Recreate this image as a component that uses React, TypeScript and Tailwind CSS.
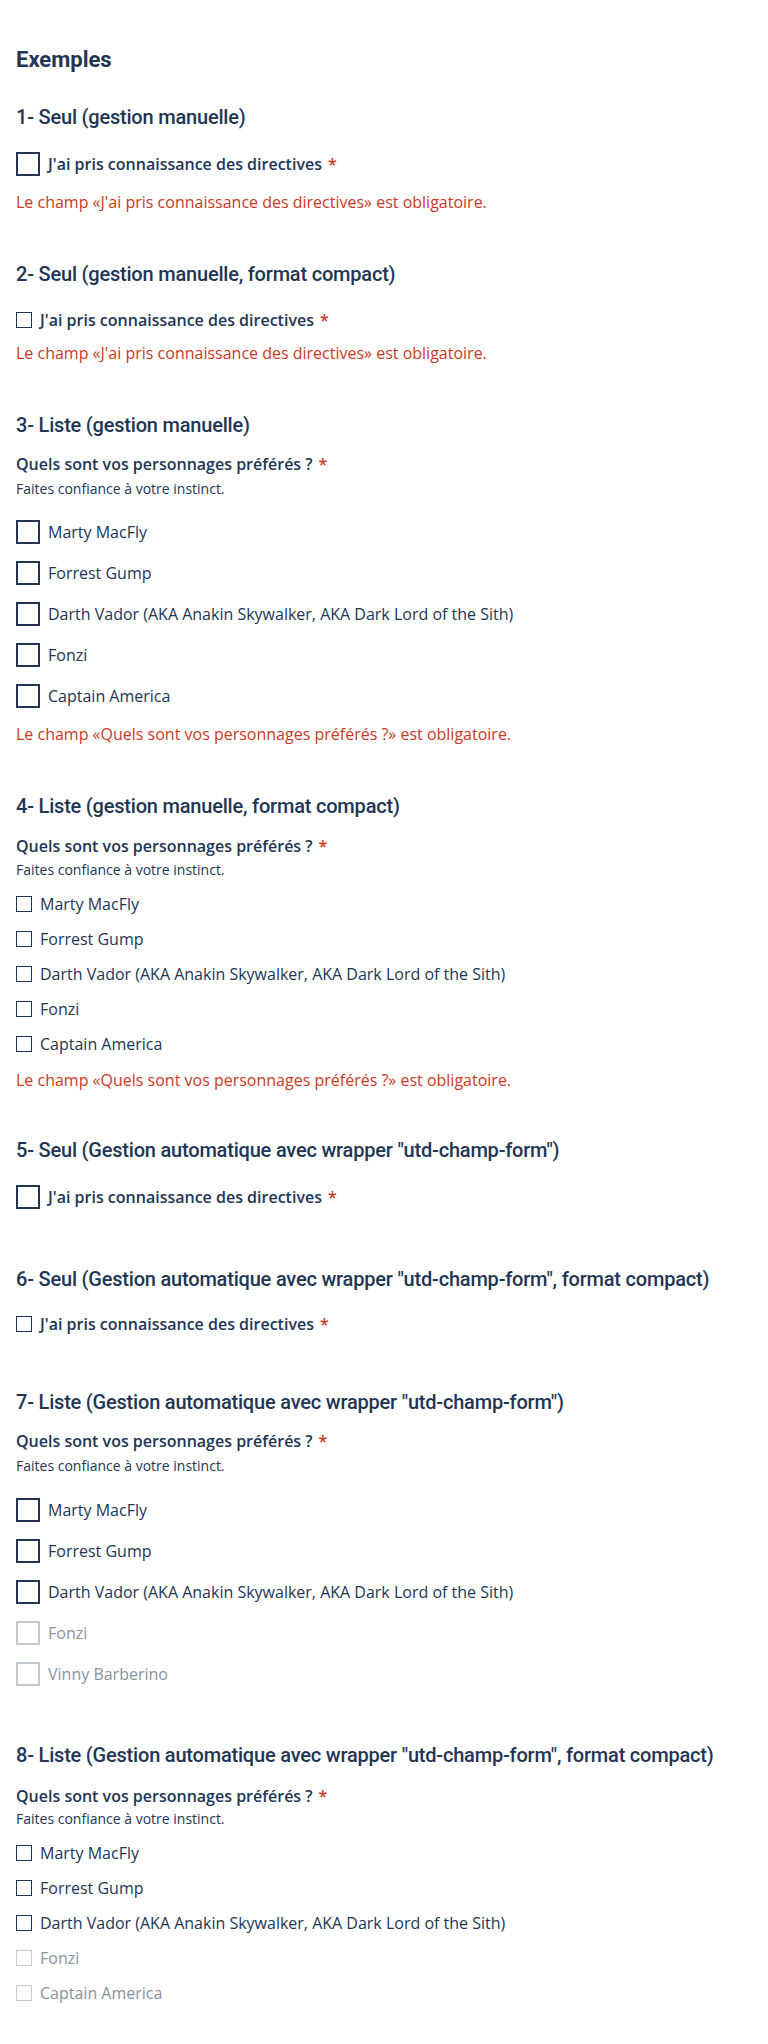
import React from 'react';

type Item = { label: string; disabled?: boolean };

const persos: Item[] = [
    { label: 'Marty MacFly' },
    { label: 'Forrest Gump' },
    { label: 'Darth Vador (AKA Anakin Skywalker, AKA Dark Lord of the Sith)' },
    { label: 'Fonzi' },
    { label: 'Captain America' },
];

const persosAuto: Item[] = [
    { label: 'Marty MacFly' },
    { label: 'Forrest Gump' },
    { label: 'Darth Vador (AKA Anakin Skywalker, AKA Dark Lord of the Sith)' },
    { label: 'Fonzi', disabled: true },
    { label: 'Vinny Barberino', disabled: true },
];

const persosAutoCompact: Item[] = [
    { label: 'Marty MacFly' },
    { label: 'Forrest Gump' },
    { label: 'Darth Vador (AKA Anakin Skywalker, AKA Dark Lord of the Sith)' },
    { label: 'Fonzi', disabled: true },
    { label: 'Captain America', disabled: true },
];

function Titre({ children, className = '' }: { children: React.ReactNode; className?: string }) {
    return (
        <h3 className={`font-['Roboto',sans-serif] font-medium text-[20px] leading-6 tracking-[-0.2px] text-[#223654] ${className}`}>
            {children}
        </h3>
    );
}

function Requis() {
    return <span className="text-[#cb381f] ml-1.5">*</span>;
}

function Case({ label, disabled, compact, strong, required }: { label: string; disabled?: boolean; compact?: boolean; strong?: boolean; required?: boolean }) {
    return (
        <label className="flex items-center h-6 gap-2">
            <span
                className={
                    compact
                        ? `block w-4 h-4 border ${disabled ? 'border-[#c5cad2]' : 'border-[#223654]'}`
                        : `block w-6 h-6 border-2 ${disabled ? 'border-[#c5cad2]' : 'border-[#223654]'}`
                }
            />
            <span className={`text-base leading-6 ${strong ? 'font-semibold' : ''} ${disabled ? 'text-[#8893a2]' : 'text-[#223654]'}`}>
                {label}
                {required && <Requis />}
            </span>
        </label>
    );
}

function Erreur({ children, className = '' }: { children: React.ReactNode; className?: string }) {
    return <p className={`text-base leading-6 text-[#cb381f] ${className}`}>{children}</p>;
}

function Question({ className = '' }: { className?: string }) {
    return (
        <p className={`text-base leading-6 font-semibold text-[#223654] ${className}`}>
            Quels sont vos personnages préférés ?<Requis />
        </p>
    );
}

function Aide({ className = '' }: { className?: string }) {
    return <p className={`text-[14px] leading-[18px] text-[#223654] ${className}`}>Faites confiance à votre instinct.</p>;
}

export default function App() {
    return (
        <div className="min-h-[2044px] bg-white px-4 pt-12 font-['Open_Sans',sans-serif] text-[#223654]">
            <h2 className="font-['Roboto',sans-serif] font-bold text-[22px] leading-6 text-[#223654]">Exemples</h2>

            {/* 1 */}
            <Titre className="mt-[33px]">1- Seul (gestion manuelle)</Titre>
            <div className="mt-[23px]">
                <Case label="J'ai pris connaissance des directives" strong required />
            </div>
            <Erreur className="mt-[14px]">Le champ «J'ai pris connaissance des directives» est obligatoire.</Erreur>

            {/* 2 */}
            <Titre className="mt-12">2- Seul (gestion manuelle, format compact)</Titre>
            <div className="mt-[22px]">
                <Case label="J'ai pris connaissance des directives" strong required compact />
            </div>
            <Erreur className="mt-[9px]">Le champ «J'ai pris connaissance des directives» est obligatoire.</Erreur>

            {/* 3 */}
            <Titre className="mt-12">3- Liste (gestion manuelle)</Titre>
            <Question className="mt-[15px]" />
            <Aide className="mt-1" />
            <div className="mt-[22px] flex flex-col gap-[17px]">
                {persos.map((p) => (
                    <Case key={p.label} label={p.label} />
                ))}
            </div>
            <Erreur className="mt-[14px]">Le champ «Quels sont vos personnages préférés ?» est obligatoire.</Erreur>

            {/* 4 */}
            <Titre className="mt-12">4- Liste (gestion manuelle, format compact)</Titre>
            <Question className="mt-4" />
            <Aide className="mt-[3px]" />
            <div className="mt-[13px] flex flex-col gap-[11px]">
                {persos.map((p) => (
                    <Case key={p.label} label={p.label} compact />
                ))}
            </div>
            <Erreur className="mt-3">Le champ «Quels sont vos personnages préférés ?» est obligatoire.</Erreur>

            {/* 5 */}
            <Titre className="mt-[46px]">5- Seul (Gestion automatique avec wrapper "utd-champ-form")</Titre>
            <div className="mt-[23px]">
                <Case label="J'ai pris connaissance des directives" strong required />
            </div>

            {/* 6 */}
            <Titre className="mt-[58px]">6- Seul (Gestion automatique avec wrapper "utd-champ-form", format compact)</Titre>
            <div className="mt-[21px]">
                <Case label="J'ai pris connaissance des directives" strong required compact />
            </div>

            {/* 7 */}
            <Titre className="mt-[54px]">7- Liste (Gestion automatique avec wrapper "utd-champ-form")</Titre>
            <Question className="mt-[15px]" />
            <Aide className="mt-1" />
            <div className="mt-[23px] flex flex-col gap-[17px]">
                {persosAuto.map((p) => (
                    <Case key={p.label} label={p.label} disabled={p.disabled} />
                ))}
            </div>

            {/* 8 */}
            <Titre className="mt-[57px]">8- Liste (Gestion automatique avec wrapper "utd-champ-form", format compact)</Titre>
            <Question className="mt-[17px]" />
            <Aide className="mt-[2px]" />
            <div className="mt-[13px] flex flex-col gap-[11px]">
                {persosAutoCompact.map((p) => (
                    <Case key={p.label} label={p.label} disabled={p.disabled} compact />
                ))}
            </div>
        </div>
    );
}
